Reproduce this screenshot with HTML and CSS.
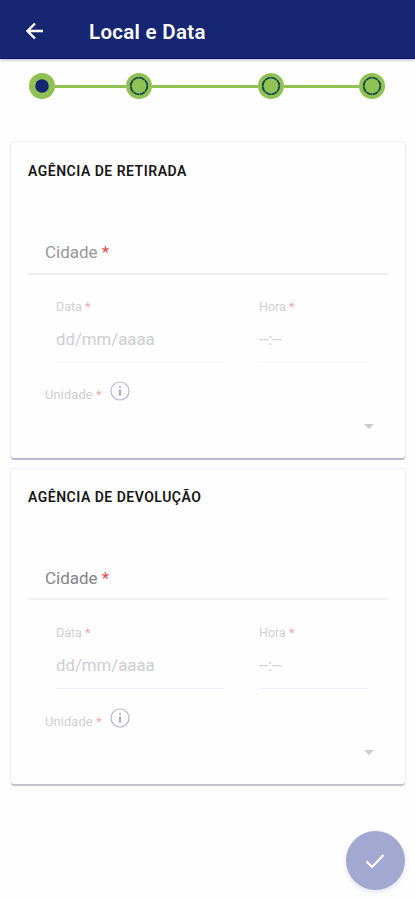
FILE: index.html
```html
<!DOCTYPE html>
<html lang="pt-BR">
<head>
<meta charset="utf-8">
<meta name="viewport" content="width=device-width, initial-scale=1">
<title>Local e Data</title>
<link rel="stylesheet" href="styles.css">
</head>
<body>
<header class="bar">
  <svg class="back" viewBox="0 0 18 18"><path d="M17 9H2M9 1.500L1.500 9L9 16.500"/></svg>
  <h1>Local e Data</h1>
</header>
<nav class="steps">
  <svg class="dot" viewBox="0 0 26 26"><circle class="disc" cx="13" cy="13" r="13"/><circle class="current" cx="13" cy="13" r="6.800"/></svg>
  <i class="link link-a"></i>
  <svg class="dot" viewBox="0 0 26 26"><circle class="disc" cx="13" cy="13" r="13"/><circle class="ring" cx="13" cy="13" r="8.300"/></svg>
  <i class="link link-b"></i>
  <svg class="dot" viewBox="0 0 26 26"><circle class="disc" cx="13" cy="13" r="13"/><circle class="ring" cx="13" cy="13" r="8.300"/></svg>
  <i class="link link-c"></i>
  <svg class="dot" viewBox="0 0 26 26"><circle class="disc" cx="13" cy="13" r="13"/><circle class="ring" cx="13" cy="13" r="8.300"/></svg>
</nav>
<main>
  <section class="card">
    <h2>AGÊNCIA DE RETIRADA</h2>
    <div class="city">Cidade <b>*</b></div>
    <div class="when">
      <div class="field date"><label>Data <b>*</b></label><div class="value">dd/mm/aaaa</div></div>
      <div class="field time"><label>Hora <b>*</b></label><div class="value">--:--</div></div>
    </div>
    <div class="unit"><label>Unidade <b>*</b></label><svg class="info" viewBox="0 0 20 20"><circle cx="10" cy="10" r="9"/><path d="M10 8.500V14.500M10 5.200V6.800"/></svg></div>
    <div class="select"><svg viewBox="0 0 10 5"><path d="M0 0H10L5 5Z"/></svg></div>
  </section>
  <section class="card return">
    <h2>AGÊNCIA DE DEVOLUÇÃO</h2>
    <div class="city">Cidade <b>*</b></div>
    <div class="when">
      <div class="field date"><label>Data <b>*</b></label><div class="value">dd/mm/aaaa</div></div>
      <div class="field time"><label>Hora <b>*</b></label><div class="value">--:--</div></div>
    </div>
    <div class="unit"><label>Unidade <b>*</b></label><svg class="info" viewBox="0 0 20 20"><circle cx="10" cy="10" r="9"/><path d="M10 8.500V14.500M10 5.200V6.800"/></svg></div>
    <div class="select"><svg viewBox="0 0 10 5"><path d="M0 0H10L5 5Z"/></svg></div>
  </section>
</main>
<footer>
  <button class="confirm" aria-label="Confirmar"><svg viewBox="0 0 20 16"><path d="M1.500 8.500L7 14L18.500 2"/></svg></button>
</footer>
</body>
</html>
```
FILE: styles.css
```css
* { box-sizing: border-box; }
body {
  margin: 0;
  height: 900px;
  overflow: hidden;
  background: #fefefe;
  font-family: Roboto, "Liberation Sans", sans-serif;
}
.bar {
  display: flex;
  align-items: center;
  height: 59px;
  padding: 3px 0 0 26px;
  background: #172673;
  border-bottom: 1px solid #0e1760;
  box-shadow: 0 1px 3px #17267355;
}
.back {
  width: 18px;
  height: 18px;
  fill: none;
  stroke: #fff;
  stroke-width: 2.3;
}
h1 {
  margin: 3px 0 0 45px;
  color: #fff;
  font-size: 20.5px;
  font-weight: 600;
  letter-spacing: 0.3px;
  line-height: 28px;
}
.steps {
  display: flex;
  align-items: center;
  height: 26px;
  margin: 13.5px 0 43.5px 29px;
}
.dot { flex: none; width: 26px; height: 26px; }
.disc { fill: #8fc153; }
.current { fill: #172673; }
.ring {
  fill: none;
  stroke: #174653;
  stroke-width: 1.8;
  stroke-dasharray: 6 0.5;
}
.link { height: 3px; margin-top: 2px; background: #8fc153; }
.link-a { width: 71.2px; }
.link-b { width: 105.8px; }
.link-c { width: 74.6px; }
main {
  display: flex;
  flex-direction: column;
  gap: 11px;
  padding: 0 10px 0 11px;
}
.card {
  height: 316px;
  padding: 19px 17px 0;
  border-radius: 3px;
  background: #fefefe;
  box-shadow: 0 2px 1px #b9b8ce, 0 0 2px 1px #f0effc;
}
.return {
  height: 315px;
  padding-top: 18px;
  box-shadow: 0 2px 1px #c3c2cb, 0 0 2px 1px #f0effc;
}
h2 {
  height: 20px;
  margin: 0;
  color: #171717;
  font-size: 14px;
  font-weight: 600;
  letter-spacing: 0.5px;
  line-height: 20px;
  white-space: nowrap;
}
b { color: #e0524c; font-weight: 400; }
.city {
  height: 42px;
  margin-top: 52px;
  padding-left: 17px;
  border-bottom: 2px solid #efeff1;
  color: #97979b;
  font-size: 17px;
  line-height: 39px;
}
.return .city { height: 41px; color: #858589; }
.when {
  display: flex;
  gap: 35px;
  padding: 23px 20px 0 28px;
}
.return .when { padding-top: 24px; }
.field { height: 65px; border-bottom: 1px solid #f7f7fb; }
.return .field { border-color: #ececfa; }
.date { width: 168px; }
.time { width: 109px; }
label {
  display: block;
  color: #d0d0d4;
  font-size: 12.5px;
  line-height: 18px;
}
label b { color: #f1a9ae; }
.value {
  margin-top: 12px;
  color: #cdcdd4;
  font-size: 16.8px;
  line-height: 22px;
}
.unit {
  display: flex;
  gap: 8px;
  height: 25px;
  margin-top: 18px;
  padding-left: 17px;
}
.return .unit { height: 24px; margin-top: 19px; }
.unit label { padding-top: 5px; font-size: 13px; letter-spacing: 0.05px; }
.info {
  width: 20px;
  height: 20px;
  fill: none;
  stroke: #b4b4d2;
  stroke-width: 1.2;
}
.info path { stroke: #8c8cc0; stroke-width: 1.5; }
.select {
  display: flex;
  justify-content: flex-end;
  padding: 18px 14px 0 0;
}
.select svg { width: 10px; height: 5px; fill: #cbcbce; }
footer {
  display: flex;
  justify-content: flex-end;
  padding: 47px 10px 0 0;
}
.confirm {
  display: flex;
  align-items: center;
  justify-content: center;
  width: 59px;
  height: 59px;
  padding: 0 1px 0 0;
  border: 0;
  border-radius: 50%;
  background: #a2a8d0;
  box-shadow: 0 2px 5px #a2a8d055;
}
.confirm svg {
  width: 20px;
  height: 16px;
  fill: none;
  stroke: #fff;
  stroke-width: 2;
}
```
